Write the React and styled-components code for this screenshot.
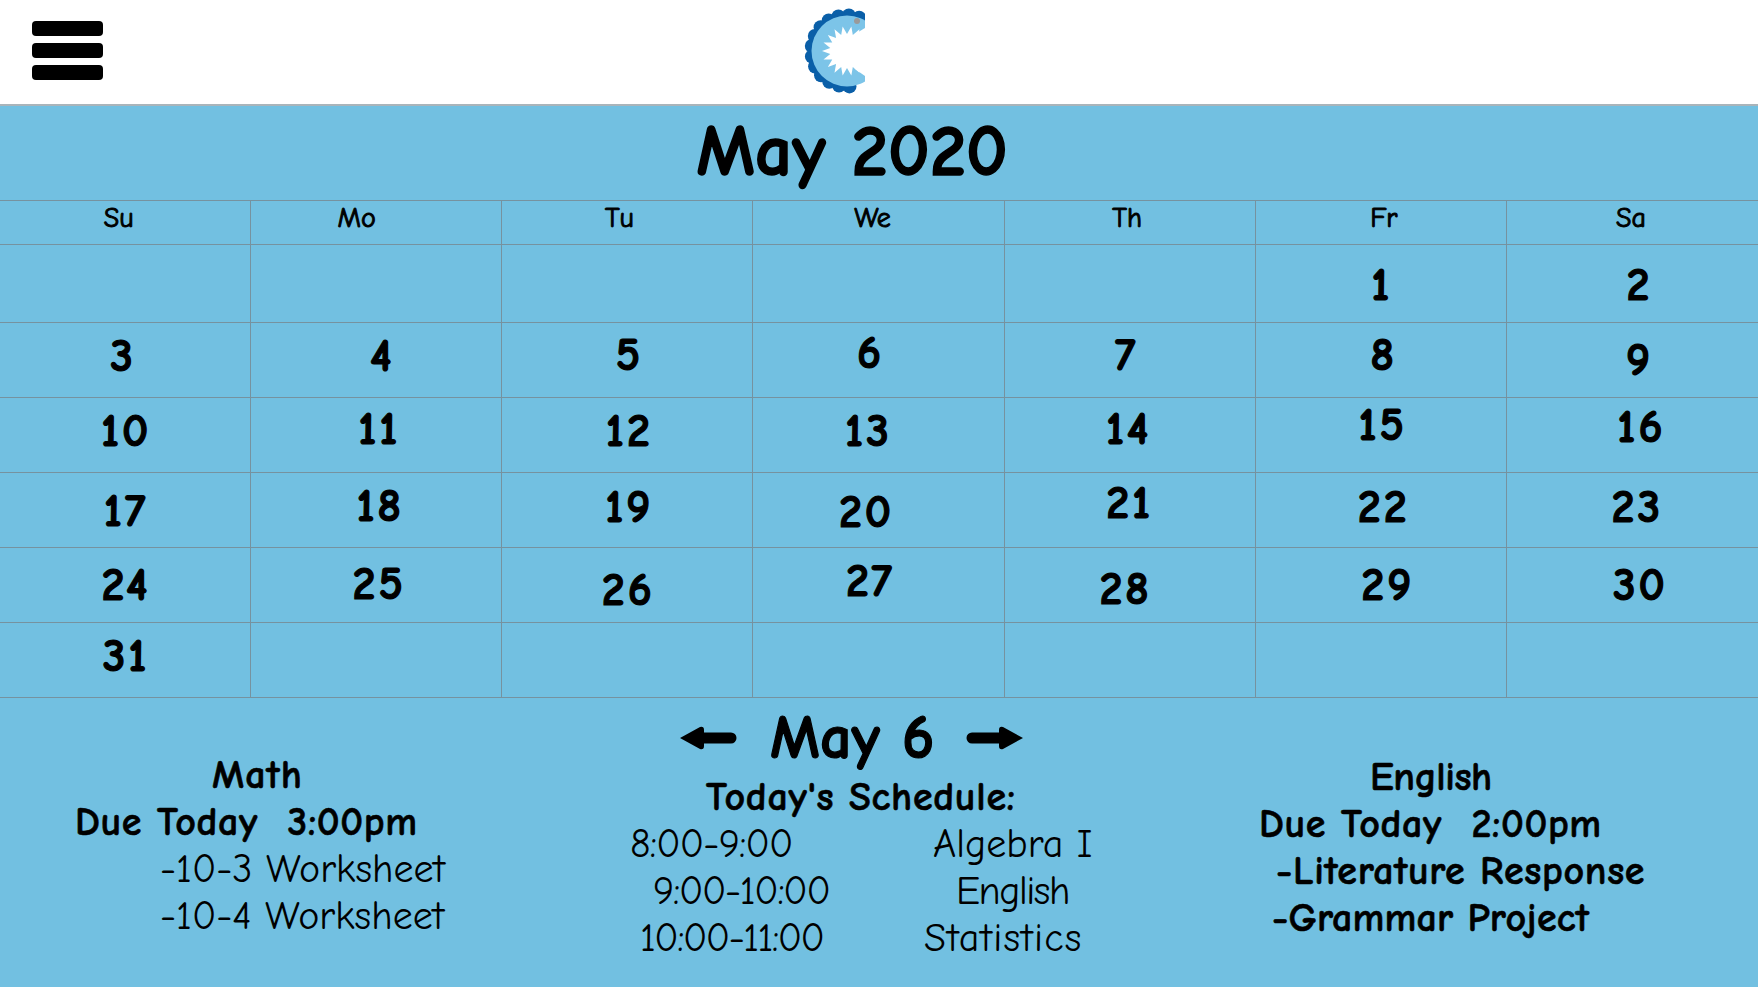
import React from "react";
import styled, { createGlobalStyle } from "styled-components";

const FONT = `"Comic Sans MS", "Comic Neue", Lato, "Noto Sans", sans-serif`;
const BLUE = "#72c0e1";
const LINE = "#76929f";

const days = ["Su", "Mo", "Tu", "We", "Th", "Fr", "Sa"];

// each number sits a little off centre in the reference, so x / y nudge it
const weeks = [
    [null, null, null, null, null, { n: 1, x: 1, y: 2 }, { n: 2, x: 7, y: 2 }],
    [{ n: 3, x: -2, y: -3 }, { n: 4, x: 6, y: -3 }, { n: 5, x: 2, y: -4 }, { n: 6, x: -8, y: -6 }, { n: 7, x: -3, y: -4 }, { n: 8, x: 3, y: -4 }, { n: 9, x: 7, y: 1 }],
    [{ n: 10, x: 1, y: -3 }, { n: 11, x: 3, y: -5 }, { n: 12, x: 2, y: -3 }, { n: 13, x: -10, y: -3 }, { n: 14, x: -1, y: -5 }, { n: 15, x: 2, y: -9 }, { n: 16, x: 9, y: -7 }],
    [{ n: 17, x: 1, y: 2 }, { n: 18, x: 4, y: -3 }, { n: 19, x: 2, y: -2 }, { n: 20, x: -12, y: 3 }, { n: 21, x: 0, y: -6 }, { n: 22, x: 3, y: -2 }, { n: 23, x: 5, y: -2 }],
    [{ n: 24, x: 1, y: 1 }, { n: 25, x: 3, y: 0 }, { n: 26, x: 1, y: 6 }, { n: 27, x: -8, y: -3 }, { n: 28, x: -4, y: 5 }, { n: 29, x: 7, y: 1 }, { n: 30, x: 8, y: 1 }],
    [{ n: 31, x: 1, y: -3 }, null, null, null, null, null, null],
];

const GlobalStyle = createGlobalStyle`
    html, body {
        margin: 0;
        padding: 0;
        background: ${BLUE};
    }
    * {
        box-sizing: border-box;
    }
`;

const Page = styled.div`
    width: 1758px;
    height: 987px;
    overflow: hidden;
    font-family: ${FONT};
    color: black;
    background: ${BLUE};
`;

const Header = styled.header`
    display: flex;
    align-items: center;
    height: 106px;
    padding-left: 32px;
    background: white;
    border-bottom: 2px solid #a9b4ba;
`;

const Menu = styled.div`
    display: flex;
    flex-direction: column;
    gap: 7px;
    width: 71px;
    margin-bottom: 3px;
`;

const MenuBar = styled.span`
    display: block;
    height: 15px;
    border-radius: 4px;
    background: black;
`;

const LogoWrap = styled.div`
    width: 70px;
    height: 92px;
`;

const LogoSlot = styled(LogoWrap)`
    margin-left: 697px;
`;

const Title = styled.h1`
    height: 94px;
    margin: 0;
    padding-right: 54px;
    font-size: 73px;
    font-weight: 700;
    line-height: 90px;
    text-align: center;
    -webkit-text-stroke: 1.5px black;
`;

const Table = styled.div`
    display: grid;
    grid-template-columns: repeat(7, 1fr);
    grid-template-rows: 44px 78px repeat(5, 75px);
    border-top: 1px solid ${LINE};
`;

const Cell = styled.div`
    display: flex;
    align-items: center;
    justify-content: center;
    border-bottom: 1px solid ${LINE};
    border-right: 1px solid ${LINE};

    &:nth-child(7n) {
        border-right: none;
    }
`;

const DayName = styled.span`
    margin-left: ${(p) => p.$x}px;
    margin-bottom: 9px;
    font-size: 28px;
    font-weight: 400;
    -webkit-text-stroke: 1px black;
`;

const DayNumber = styled.span`
    margin-left: ${(p) => p.$x * 2}px;
    margin-top: ${(p) => p.$y * 2}px;
    font-size: 46px;
    font-weight: 700;
    line-height: 1;
    letter-spacing: 3px;
    -webkit-text-stroke: 1.2px black;
`;

const Bottom = styled.section`
    display: grid;
    grid-template-columns: 600px 540px 1fr;
`;

const Side = styled.div`
    padding-top: ${(p) => p.$top}px;
`;

const Line = styled.div`
    height: 47px;
    margin-left: ${(p) => p.$left}px;
    font-size: 40px;
    font-weight: ${(p) => (p.$bold ? 700 : 400)};
    line-height: 47px;
    letter-spacing: ${(p) => p.$spacing || 0}px;
    white-space: pre;
    -webkit-text-stroke: ${(p) => (p.$bold ? "0.6px black" : "0")};
`;

const DayNav = styled.div`
    display: flex;
    align-items: center;
    height: 73px;
    margin-top: 3px;
    margin-left: 80px;
`;

const DayTitle = styled.h2`
    width: 229px;
    margin: 0;
    padding-left: 33px;
    font-size: 62px;
    font-weight: 700;
    line-height: 68px;
    -webkit-text-stroke: 1.2px black;
`;

const Schedule = styled.div`
    display: grid;
    grid-template-columns: 303px 1fr;
`;

const ArrowIcon = ({ right }) => (
    <svg width="57" height="26" viewBox="0 0 57 26" style={right ? { transform: "scaleX(-1)" } : undefined}>
        <path d="M0 13 L20 2 Q24 1 24 5 V7.5 H51 A5.5 5.5 0 0 1 51 18.5 H24 V21 Q24 25 20 24 Z" fill="black" />
    </svg>
);

const Logo = () => {
    const cx = 47;
    const cy = 45;
    const scallops = [];
    for (let a = 70; a <= 290; a += 17) {
        const r = (a * Math.PI) / 180;
        scallops.push([cx + 35.5 * Math.cos(r), cy - 35.5 * Math.sin(r)]);
    }
    const spikes = [];
    for (let a = 50; a <= 310; a += 10) {
        const r = (a * Math.PI) / 180;
        const len = (a - 50) % 20 === 0 ? 17 : 25;
        spikes.push(`${cx + len * Math.cos(r)},${cy + len * Math.sin(r)}`);
    }
    return (
        <svg width="70" height="92" viewBox="0 0 70 92">
            <defs>
                <clipPath id="logoClip">
                    <rect x="0" y="0" width="65" height="92" />
                </clipPath>
            </defs>
            <g clipPath="url(#logoClip)">
                {scallops.map(([x, y], i) => (
                    <circle key={i} cx={x} cy={y} r="7" fill="#0a5fa8" />
                ))}
                <circle cx={cx} cy={cy} r="35.5" fill="#7cc4e8" />
                <polygon points={spikes.join(" ")} fill="white" />
                <polygon points={`${cx},${cy} 55,28 65,22 65,70 55,63`} fill="white" />
                <circle cx="57" cy="15" r="3" fill="#9a9a9a" />
            </g>
        </svg>
    );
};

const App = () => {
    const dayOffsets = [-13, -39, -16, -12, -5, 6, -3];

    return (
        <Page>
            <GlobalStyle />
            <Header>
                <Menu>
                    <MenuBar />
                    <MenuBar />
                    <MenuBar />
                </Menu>
                <LogoSlot>
                    <Logo />
                </LogoSlot>
            </Header>
            <Title>May 2020</Title>
            <Table>
                {days.map((d, i) => (
                    <Cell key={d}>
                        <DayName $x={dayOffsets[i]}>{d}</DayName>
                    </Cell>
                ))}
                {weeks.flat().map((c, i) => (
                    <Cell key={i}>
                        {c && (
                            <DayNumber $x={c.x} $y={c.y}>
                                {c.n}
                            </DayNumber>
                        )}
                    </Cell>
                ))}
            </Table>
            <Bottom>
                <Side $top={54}>
                    <Line $bold $left={212} $spacing={1}>Math</Line>
                    <Line $bold $left={75} $spacing={0.6}>{"Due Today  3:00pm"}</Line>
                    <Line $left={160}>-10-3 Worksheet</Line>
                    <Line $left={160}>-10-4 Worksheet</Line>
                </Side>
                <div>
                    <DayNav>
                        <ArrowIcon />
                        <DayTitle>May 6</DayTitle>
                        <ArrowIcon right />
                    </DayNav>
                    <Line $bold $left={106} $spacing={0.7}>Today's Schedule:</Line>
                    <Schedule>
                        <Line $left={30} $spacing={-0.8}>8:00-9:00</Line>
                        <Line $left={30}>Algebra I</Line>
                        <Line $left={53} $spacing={-1.3}>9:00-10:00</Line>
                        <Line $left={53} $spacing={-1.5}>English</Line>
                        <Line $left={40} $spacing={-1.5}>10:00-11:00</Line>
                        <Line $left={21} $spacing={1.2}>Statistics</Line>
                    </Schedule>
                </div>
                <Side $top={56}>
                    <Line $bold $left={230} $spacing={-0.4}>English</Line>
                    <Line $bold $left={119} $spacing={0.6}>{"Due Today  2:00pm"}</Line>
                    <Line $bold $left={136} $spacing={0.65}>-Literature Response</Line>
                    <Line $bold $left={132} $spacing={0.15}>-Grammar Project</Line>
                </Side>
            </Bottom>
        </Page>
    );
};

export default App;
